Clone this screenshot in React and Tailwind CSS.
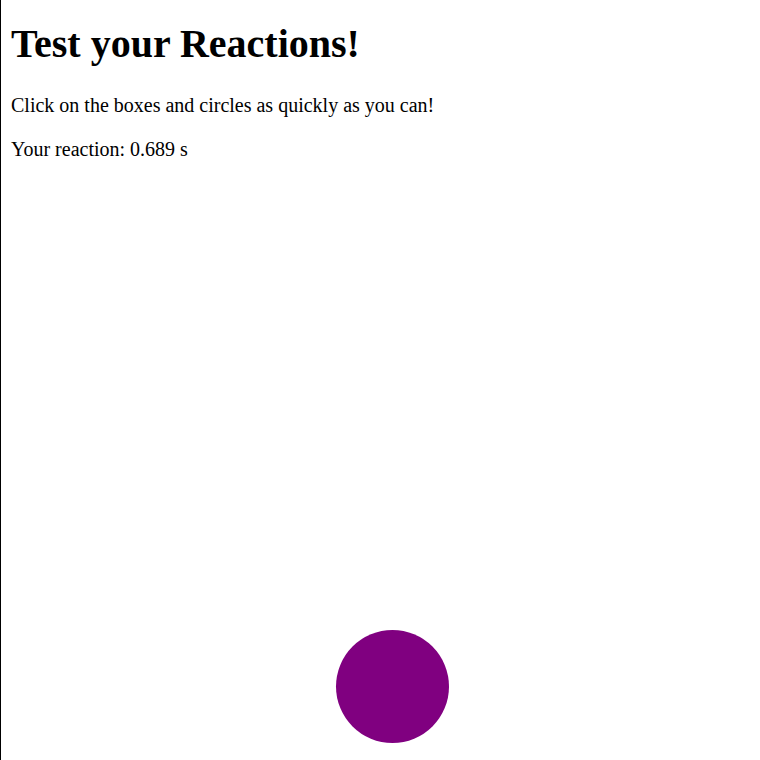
export default function App() {
  return (
    <div
      className="relative h-[760px] w-full overflow-hidden border-l border-black bg-white pl-[10px] text-black"
      style={{ fontFamily: '"Liberation Serif", "Times New Roman", serif' }}
    >
      <h1 className="m-0 pt-[21px] text-[40px] font-bold leading-[46px]">Test your Reactions!</h1>
      <p className="mt-[27px] text-[20px] leading-[23px]">Click on the boxes and circles as quickly as you can!</p>
      <p className="mt-[21px] text-[20px] leading-[23px]">Your reaction: 0.689 s</p>
      <div className="absolute left-[335px] top-[630px] h-[113px] w-[113px] rounded-full bg-[#800080]"></div>
    </div>
  );
}
